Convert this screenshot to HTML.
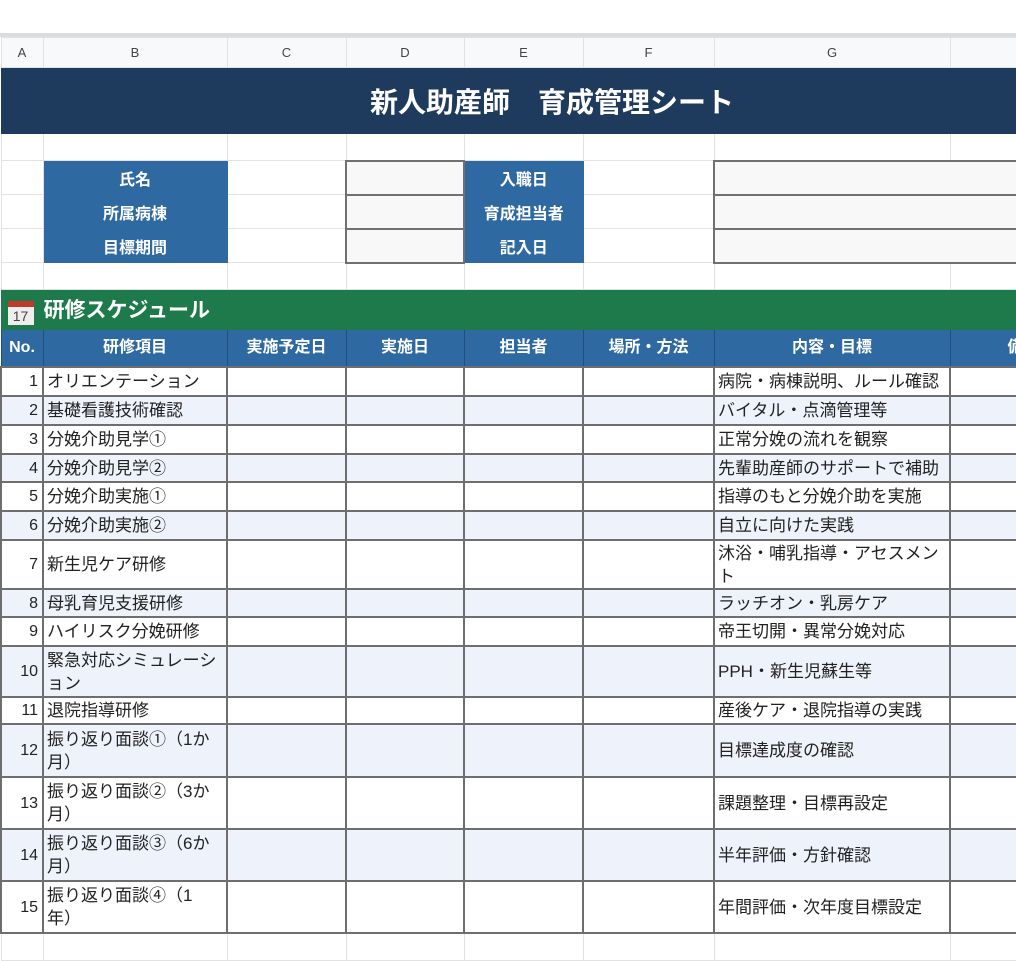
<!DOCTYPE html>
<html><head><meta charset="utf-8">
<style>
body{margin:0;background:#fff;width:1016px;height:950px;overflow:hidden;font-family:"Liberation Sans","Noto Sans CJK JP",sans-serif;}
.top{height:33px;background:#fff}
.bar{height:4px;background:#dcdcdc}
table{border-collapse:collapse;table-layout:fixed;width:1096px;}
td{border:1px solid #e2e2e2;padding:0;font-size:16px;color:#222;overflow:hidden;white-space:nowrap;vertical-align:middle}
.ch td{background:#f8f9fa;color:#444;font-size:13px;text-align:center;height:29px;}
.title td{background:#1e3a5c;color:#fff;font-size:28px;font-weight:bold;text-align:center;padding-left:6px;height:65px;border-color:#1e3a5c}
.lbl{background:#2f69a2 !important;color:#fff;font-weight:bold;text-align:center;border-color:#2f69a2 !important}
.inb{background:#f8f8f8;border:2px solid #707070 !important}
.sec td{background:#1f7a4b;color:#fff;font-size:21px;font-weight:bold;height:39px;border-color:#1f7a4b}
.th td{background:#2f69a2;color:#fff;font-weight:bold;text-align:center;height:36px;border-color:#1f4f7e;line-height:20px}
.d td{border:2px solid #6e6e6e;line-height:23px;font-size:17px}
.d td.n{text-align:right;padding-right:4px;font-size:16px}
.d td.t{padding-left:3px}
.alt td{background:#eef3fb}
</style></head><body>
<div class="top"></div><div class="bar"></div>
<table>
<colgroup><col style="width:42px"><col style="width:184px"><col style="width:119px"><col style="width:118px"><col style="width:119px"><col style="width:131px"><col style="width:236px"><col style="width:147px"></colgroup>
<tr class="ch"><td>A</td><td>B</td><td>C</td><td>D</td><td>E</td><td>F</td><td>G</td><td></td></tr>
<tr class="title"><td colspan="8">新人助産師　育成管理シート</td></tr>
<tr><td style="height:26px"></td><td></td><td></td><td></td><td></td><td></td><td></td><td></td></tr>
<tr style="height:34px"><td></td><td class="lbl">氏名</td><td></td><td class="inb"></td><td class="lbl">入職日</td><td></td><td class="inb" colspan="2"></td></tr>
<tr style="height:34px"><td></td><td class="lbl">所属病棟</td><td></td><td class="inb"></td><td class="lbl">育成担当者</td><td></td><td class="inb" colspan="2"></td></tr>
<tr style="height:34px"><td></td><td class="lbl">目標期間</td><td></td><td class="inb"></td><td class="lbl">記入日</td><td></td><td class="inb" colspan="2"></td></tr>
<tr><td style="height:26px"></td><td></td><td></td><td></td><td></td><td></td><td></td><td></td></tr>
<tr class="sec"><td colspan="8"><span style="display:inline-block;width:26px;height:24px;vertical-align:-4px;margin:0 10px 0 6px;background:#eee;border-top:6px solid #c0392b;box-sizing:border-box;color:#444;font-size:14px;font-weight:normal;text-align:center;line-height:18px">17</span>研修スケジュール</td></tr>
<tr class="th"><td>No.</td><td>研修項目</td><td>実施予定日</td><td>実施日</td><td>担当者</td><td>場所・方法</td><td>内容・目標</td><td>備考</td></tr>
<tr class="d" style="height:29px"><td class="n">1</td><td class="t">オリエンテーション</td><td></td><td></td><td></td><td></td><td class="t">病院・病棟説明、ルール確認</td><td></td></tr>
<tr class="d alt" style="height:29px"><td class="n">2</td><td class="t">基礎看護技術確認</td><td></td><td></td><td></td><td></td><td class="t">バイタル・点滴管理等</td><td></td></tr>
<tr class="d" style="height:29px"><td class="n">3</td><td class="t">分娩介助見学①</td><td></td><td></td><td></td><td></td><td class="t">正常分娩の流れを観察</td><td></td></tr>
<tr class="d alt" style="height:28px"><td class="n">4</td><td class="t">分娩介助見学②</td><td></td><td></td><td></td><td></td><td class="t">先輩助産師のサポートで補助</td><td></td></tr>
<tr class="d" style="height:29px"><td class="n">5</td><td class="t">分娩介助実施①</td><td></td><td></td><td></td><td></td><td class="t">指導のもと分娩介助を実施</td><td></td></tr>
<tr class="d alt" style="height:29px"><td class="n">6</td><td class="t">分娩介助実施②</td><td></td><td></td><td></td><td></td><td class="t">自立に向けた実践</td><td></td></tr>
<tr class="d" style="height:49px"><td class="n">7</td><td class="t">新生児ケア研修</td><td></td><td></td><td></td><td></td><td class="t">沐浴・哺乳指導・アセスメン<br>ト</td><td></td></tr>
<tr class="d alt" style="height:28px"><td class="n">8</td><td class="t">母乳育児支援研修</td><td></td><td></td><td></td><td></td><td class="t">ラッチオン・乳房ケア</td><td></td></tr>
<tr class="d" style="height:29px"><td class="n">9</td><td class="t">ハイリスク分娩研修</td><td></td><td></td><td></td><td></td><td class="t">帝王切開・異常分娩対応</td><td></td></tr>
<tr class="d alt" style="height:51px"><td class="n">10</td><td class="t">緊急対応シミュレーシ<br>ョン</td><td></td><td></td><td></td><td></td><td class="t">PPH・新生児蘇生等</td><td></td></tr>
<tr class="d" style="height:27px"><td class="n">11</td><td class="t">退院指導研修</td><td></td><td></td><td></td><td></td><td class="t">産後ケア・退院指導の実践</td><td></td></tr>
<tr class="d alt" style="height:53px"><td class="n">12</td><td class="t">振り返り面談①（1か<br>月）</td><td></td><td></td><td></td><td></td><td class="t">目標達成度の確認</td><td></td></tr>
<tr class="d" style="height:52px"><td class="n">13</td><td class="t">振り返り面談②（3か<br>月）</td><td></td><td></td><td></td><td></td><td class="t">課題整理・目標再設定</td><td></td></tr>
<tr class="d alt" style="height:52px"><td class="n">14</td><td class="t">振り返り面談③（6か<br>月）</td><td></td><td></td><td></td><td></td><td class="t">半年評価・方針確認</td><td></td></tr>
<tr class="d" style="height:52px"><td class="n">15</td><td class="t">振り返り面談④（1<br>年）</td><td></td><td></td><td></td><td></td><td class="t">年間評価・次年度目標設定</td><td></td></tr>
<tr><td style="height:26px"></td><td></td><td></td><td></td><td></td><td></td><td></td><td></td></tr>
</table>
</body></html>
